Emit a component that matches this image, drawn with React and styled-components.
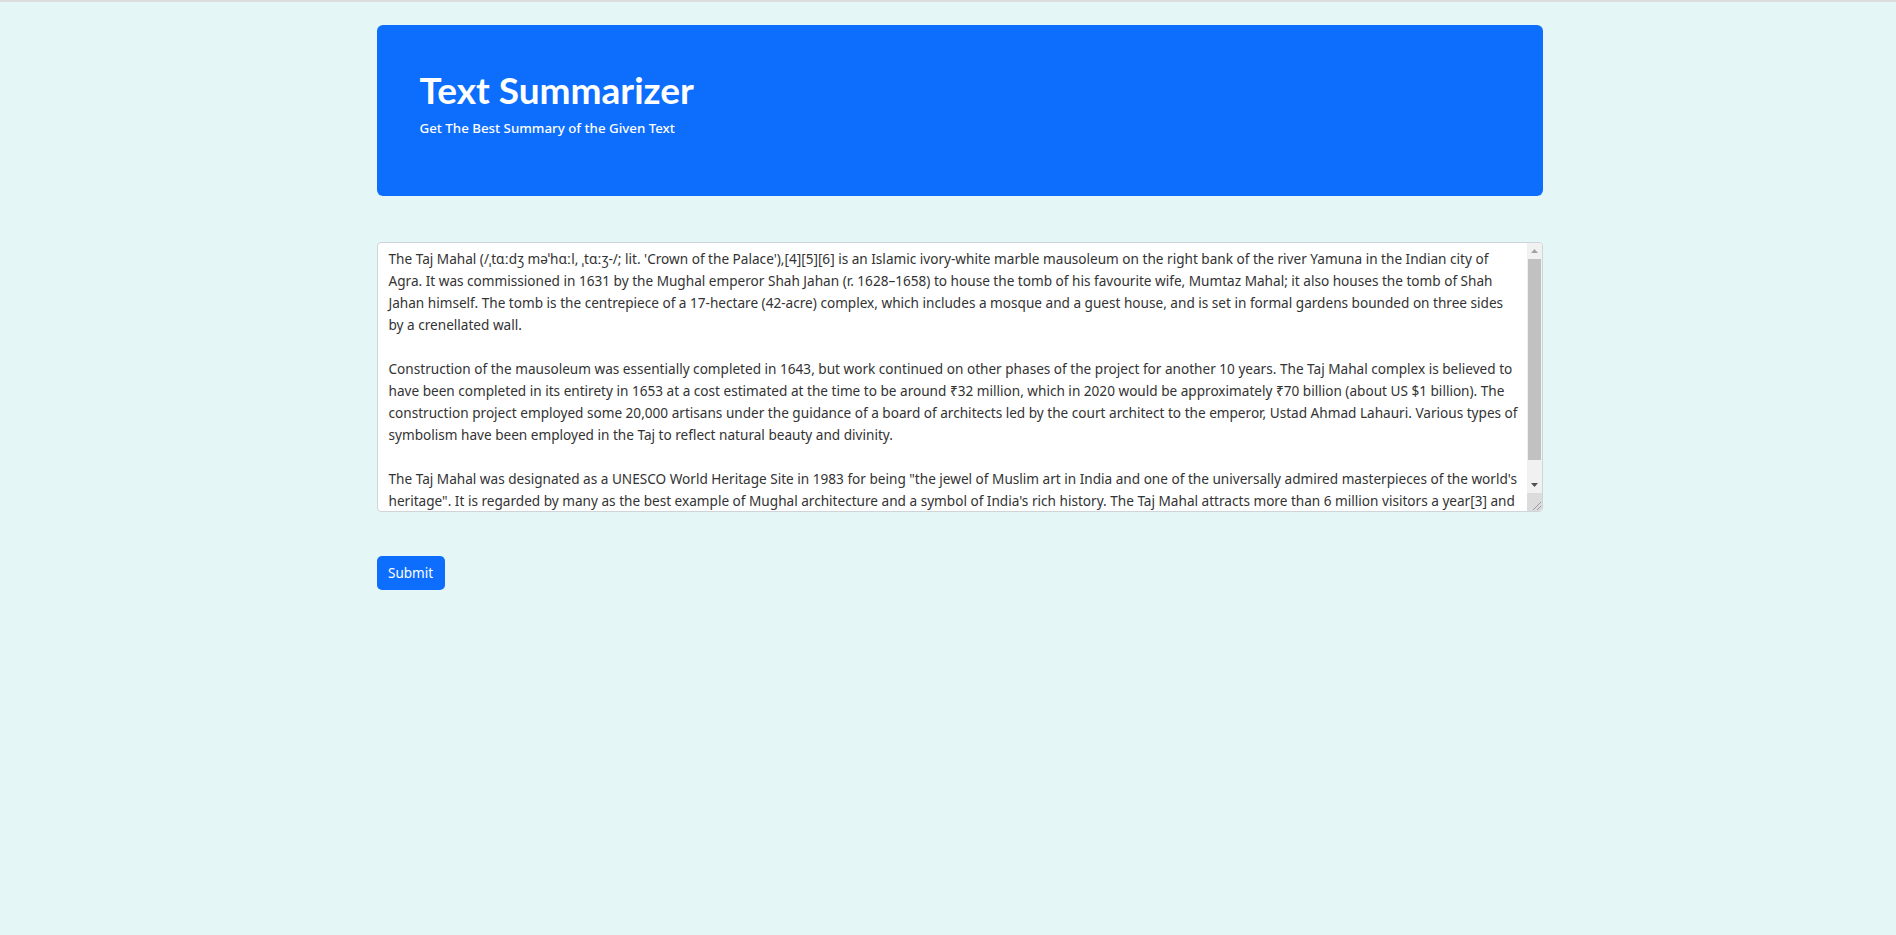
import React from "react";
import styled, { createGlobalStyle } from "styled-components";

const GlobalStyle = createGlobalStyle`
  html, body {
    margin: 0;
    padding: 0;
    background: #e5f6f6;
  }
  body {
    font-family: "Noto Sans", "Open Sans", Arial, sans-serif;
    color: #212529;
    min-height: 935px;
    border-top: 2px solid #dcdcdc;
    box-sizing: border-box;
  }
  * { box-sizing: border-box; }
`;

const Page = styled.div`
  display: flex;
  justify-content: center;
  padding: 23px 0 0 23px;
`;

const Container = styled.main`
  width: 1166px;
  display: flex;
  flex-direction: column;
`;

const Hero = styled.header`
  background: #0d6efd;
  border-radius: 6px;
  height: 171px;
  padding: 43px 43px 0;
  color: #fff;
  display: flex;
  flex-direction: column;
`;

const Title = styled.h1`
  margin: 0;
  font-family: Lato, "Noto Sans", Arial, sans-serif;
  font-size: 37px;
  font-weight: 700;
  line-height: 1.2;
`;

const Subtitle = styled.p`
  margin: 6px 0 0;
  font-size: 13.3px;
  line-height: 20px;
  font-weight: 500;
`;

const Form = styled.form`
  margin-top: 46px;
  display: flex;
  flex-direction: column;
  align-items: flex-start;
`;

const Field = styled.div`
  width: 100%;
  height: 270px;
  display: flex;
  border: 1px solid #cfd4d9;
  border-radius: 4px;
  background: #fff;
  overflow: hidden;
`;

const TextArea = styled.textarea`
  flex: 1;
  min-width: 0;
  height: 100%;
  margin: 0;
  padding: 5px 6px 5px 11px;
  border: none;
  background: transparent;
  font-family: "Noto Sans", "Open Sans", Arial, sans-serif;
  font-size: 13.6px;
  line-height: 22px;
  color: #333;
  resize: none;
  overflow: hidden;
  outline: none;
`;

const ScrollBar = styled.div`
  width: 15px;
  flex: none;
  display: flex;
  flex-direction: column;
  background: #f1f1f1;
`;

const ArrowButton = styled.div`
  height: ${(p) => p.$h}px;
  flex: none;
  display: flex;
  align-items: center;
  justify-content: center;
`;

const Track = styled.div`
  flex: 1;
  display: flex;
  flex-direction: column;
`;

const Thumb = styled.div`
  height: 201px;
  margin: 0 1px 0 1px;
  background: #c1c1c1;
`;

const Corner = styled.div`
  height: 18px;
  flex: none;
  background: #dcdcdc;
  display: flex;
  align-items: flex-end;
  justify-content: flex-end;
`;

const SubmitButton = styled.button`
  margin-top: 44px;
  height: 34px;
  padding: 0 11.5px;
  background: #0d6efd;
  color: #fff;
  border: none;
  border-radius: 5px;
  font-family: "Noto Sans", "Open Sans", Arial, sans-serif;
  font-size: 13.5px;
  cursor: pointer;
`;

const TEXT = `The Taj Mahal (/ˌtɑːdʒ məˈhɑːl, ˌtɑːʒ-/; lit. 'Crown of the Palace'),[4][5][6] is an Islamic ivory-white marble mausoleum on the right bank of the river Yamuna in the Indian city of Agra. It was commissioned in 1631 by the Mughal emperor Shah Jahan (r. 1628–1658) to house the tomb of his favourite wife, Mumtaz Mahal; it also houses the tomb of Shah Jahan himself. The tomb is the centrepiece of a 17-hectare (42-acre) complex, which includes a mosque and a guest house, and is set in formal gardens bounded on three sides by a crenellated wall.

Construction of the mausoleum was essentially completed in 1643, but work continued on other phases of the project for another 10 years. The Taj Mahal complex is believed to have been completed in its entirety in 1653 at a cost estimated at the time to be around ₹32 million, which in 2020 would be approximately ₹70 billion (about US $1 billion). The construction project employed some 20,000 artisans under the guidance of a board of architects led by the court architect to the emperor, Ustad Ahmad Lahauri. Various types of symbolism have been employed in the Taj to reflect natural beauty and divinity.

The Taj Mahal was designated as a UNESCO World Heritage Site in 1983 for being "the jewel of Muslim art in India and one of the universally admired masterpieces of the world's heritage". It is regarded by many as the best example of Mughal architecture and a symbol of India's rich history. The Taj Mahal attracts more than 6 million visitors a year[3] and in 2007, it was declared a winner of the New 7 Wonders of the World (2000–2007) initiative.`;

const ArrowUp = () => (
  <svg width="7" height="4" viewBox="0 0 7 4">
    <path d="M0 4 L3.5 0 L7 4 Z" fill="#a3a3a3" />
  </svg>
);

const ArrowDown = () => (
  <svg width="7" height="4" viewBox="0 0 7 4">
    <path d="M0 0 L7 0 L3.5 4 Z" fill="#505050" />
  </svg>
);

const Grip = () => (
  <svg width="12" height="12" viewBox="0 0 12 12">
    <path d="M11 3 L3 11 M11 7 L7 11" stroke="#9a9a9a" strokeWidth="1" />
  </svg>
);

export default function App() {
  return (
    <>
      <GlobalStyle />
      <Page>
        <Container>
          <Hero>
            <Title>Text Summarizer</Title>
            <Subtitle>Get The Best Summary of the Given Text</Subtitle>
          </Hero>
          <Form onSubmit={(e) => e.preventDefault()}>
            <Field>
              <TextArea defaultValue={TEXT} />
              <ScrollBar>
                <ArrowButton $h={16}>
                  <ArrowUp />
                </ArrowButton>
                <Track>
                  <Thumb />
                </Track>
                <ArrowButton $h={17}>
                  <ArrowDown />
                </ArrowButton>
                <Corner>
                  <Grip />
                </Corner>
              </ScrollBar>
            </Field>
            <SubmitButton type="submit">Submit</SubmitButton>
          </Form>
        </Container>
      </Page>
    </>
  );
}
